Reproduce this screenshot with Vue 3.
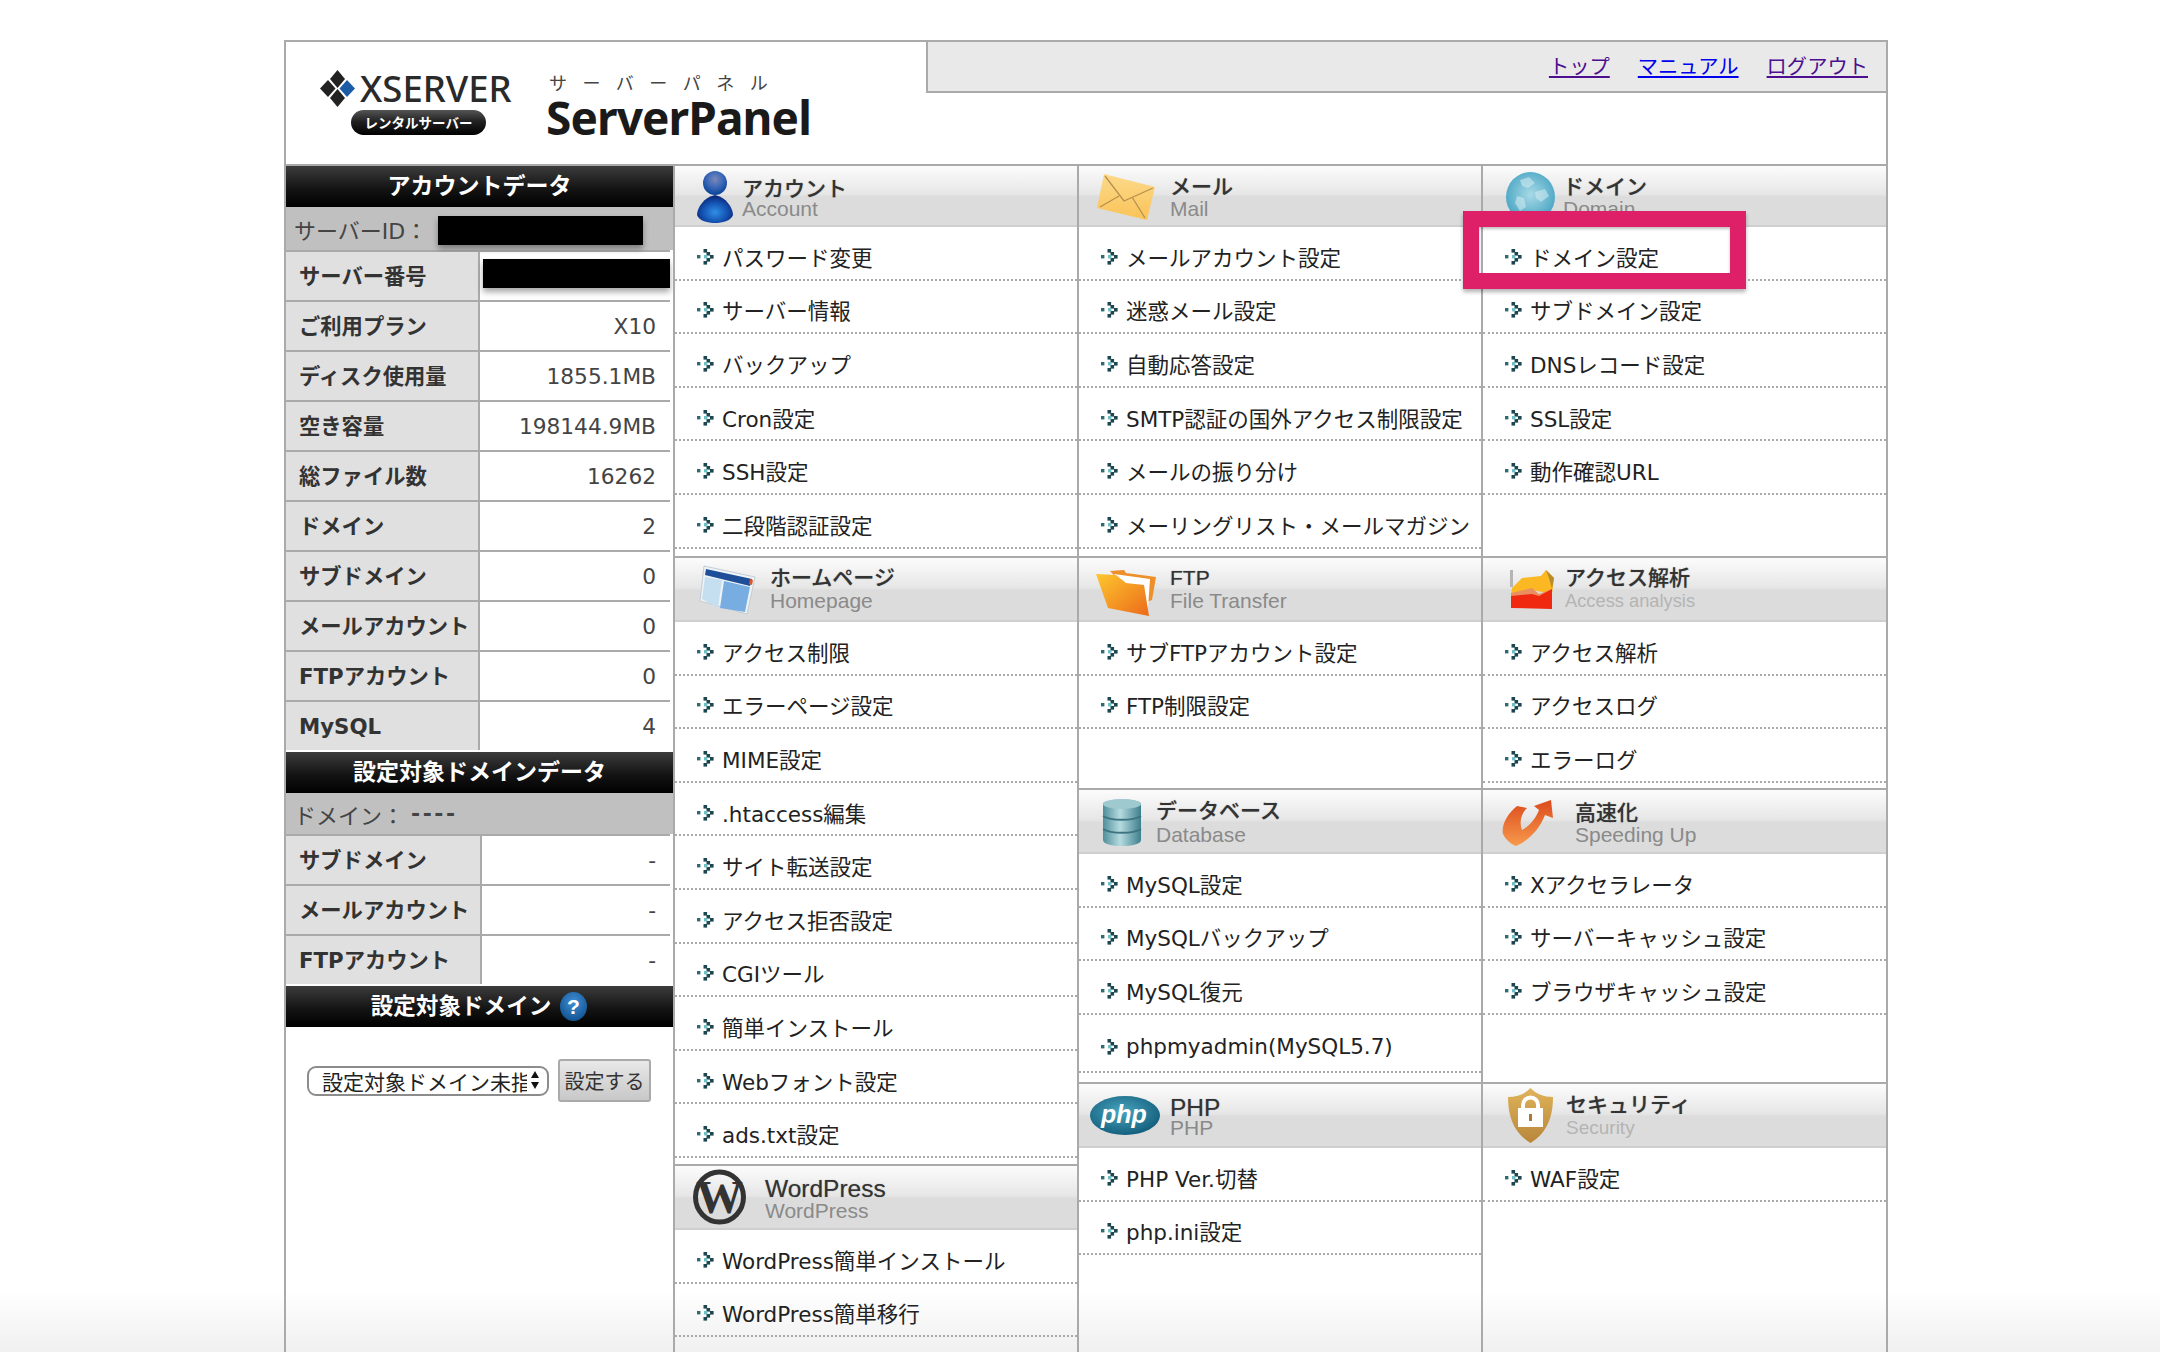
<script setup>
const statsA = [
  ['サーバー番号', null],
  ['ご利用プラン', 'X10'],
  ['ディスク使用量', '1855.1MB'],
  ['空き容量', '198144.9MB'],
  ['総ファイル数', '16262'],
  ['ドメイン', '2'],
  ['サブドメイン', '0'],
  ['メールアカウント', '0'],
  ['FTPアカウント', '0'],
  ['MySQL', '4'],
]
const statsB = [
  ['サブドメイン', '-'],
  ['メールアカウント', '-'],
  ['FTPアカウント', '-'],
]
const columns = [
  [
    { icon: 'account', title: 'アカウント', sub: 'Account', h: 390, first: true, ix: 22, iy: 5, w: 36, ih: 52, tx: 67, tc: 21, sc: 43,
      items: ['パスワード変更', 'サーバー情報', 'バックアップ', 'Cron設定', 'SSH設定', '二段階認証設定'] },
    { icon: 'home', title: 'ホームページ', sub: 'Homepage', h: 608, ix: 25, iy: 8, w: 55, ih: 48, tx: 95, tc: 18, sc: 43,
      items: ['アクセス制限', 'エラーページ設定', 'MIME設定', '.htaccess編集', 'サイト転送設定', 'アクセス拒否設定', 'CGIツール', '簡単インストール', 'Webフォント設定', 'ads.txt設定'] },
    { icon: 'wp', title: 'WordPress', sub: 'WordPress', h: 200, big: true, ix: 18, iy: 4, w: 53, ih: 54, tx: 90, tc: 21, sc: 45,
      items: ['WordPress簡単インストール', 'WordPress簡単移行'] },
  ],
  [
    { icon: 'mail', title: 'メール', sub: 'Mail', h: 390, first: true, ix: 18, iy: 8, w: 58, ih: 46, tx: 91, tc: 19, sc: 43,
      items: ['メールアカウント設定', '迷惑メール設定', '自動応答設定', 'SMTP認証の国外アクセス制限設定', 'メールの振り分け', 'メーリングリスト・メールマガジン'] },
    { icon: 'ftp', title: 'FTP', sub: 'File Transfer', h: 232, ix: 17, iy: 12, w: 60, ih: 46, tx: 91, tc: 18, sc: 43,
      items: ['サブFTPアカウント設定', 'FTP制限設定'] },
    { icon: 'db', title: 'データベース', sub: 'Database', h: 294, ix: 24, iy: 8, w: 38, ih: 48, tx: 77, tc: 19, sc: 45,
      items: ['MySQL設定', 'MySQLバックアップ', 'MySQL復元', 'phpmyadmin(MySQL5.7)'] },
    { icon: 'php', title: 'PHP', sub: 'PHP', h: 270, big: true, ix: 11, iy: 12, w: 70, ih: 39, tx: 91, tc: 22, sc: 44,
      items: ['PHP Ver.切替', 'php.ini設定'] },
  ],
  [
    { icon: 'globe', title: 'ドメイン', sub: 'Domain', h: 390, first: true, ix: 23, iy: 6, w: 49, ih: 50, tx: 80, tc: 19, sc: 43,
      items: ['ドメイン設定', 'サブドメイン設定', 'DNSレコード設定', 'SSL設定', '動作確認URL'] },
    { icon: 'access', title: 'アクセス解析', sub: 'Access analysis', h: 232, ix: 27, iy: 12, w: 48, ih: 42, tx: 82, tc: 18, sc: 43,
      items: ['アクセス解析', 'アクセスログ', 'エラーログ'] },
    { icon: 'speed', title: '高速化', sub: 'Speeding Up', h: 294, ix: 18, iy: 10, w: 53, ih: 46, tx: 92, tc: 21, sc: 45,
      items: ['Xアクセラレータ', 'サーバーキャッシュ設定', 'ブラウザキャッシュ設定'] },
    { icon: 'shield', title: 'セキュリティ', sub: 'Security', h: 270, ix: 25, iy: 4, w: 45, ih: 55, tx: 83, tc: 19, sc: 44,
      items: ['WAF設定'] },
  ],
]
</script>

<template>
  <div class="page">
    <div class="frame">
      <header class="top">
        <div class="brand">
          <svg class="mark" viewBox="0 0 35 37" width="35" height="37" aria-hidden="true">
            <polygon points="17.5,0 25,9 17.5,18 10,9" fill="#222" />
            <polygon points="8,10 15.5,18.5 8,27 0,18.5" fill="#222" />
            <polygon points="27,10 35,18.5 27,27 19.5,18.5" fill="#1c5ba6" />
            <polygon points="17.5,19 25,28 17.5,37 10,28" fill="#222" />
          </svg>
          <div class="brand-text">
            <div class="xserver">XSERVER</div>
            <div class="pill">レンタルサーバー</div>
          </div>
        </div>
        <div class="panel">
          <div class="panel-ja">サーバーパネル</div>
          <div class="panel-en">ServerPanel</div>
        </div>
        <nav class="links">
          <a class="seen">トップ</a>
          <a class="fresh">マニュアル</a>
          <a class="seen">ログアウト</a>
        </nav>
      </header>

      <div class="body">
        <aside class="side">
          <h2 class="bar">アカウントデータ</h2>
          <div class="idrow">サーバーID：<span class="mask id"></span></div>
          <div v-for="s in statsA" :key="s[0]" class="stat">
            <div class="lab">{{ s[0] }}</div>
            <div class="val"><span v-if="s[1] === null" class="mask num"></span><template v-else>{{ s[1] }}</template></div>
          </div>
          <h2 class="bar ruled">設定対象ドメインデータ</h2>
          <div class="idrow short">ドメイン： <span class="dashes">----</span></div>
          <div v-for="s in statsB" :key="s[0]" class="stat wide">
            <div class="lab">{{ s[0] }}</div>
            <div class="val">{{ s[1] }}</div>
          </div>
          <h2 class="bar ruled last">設定対象ドメイン
            <svg class="help" viewBox="0 0 29 29" width="29" height="29" aria-hidden="true">
              <defs>
                <radialGradient id="hg" cx="50%" cy="35%" r="70%"><stop offset="0" stop-color="#3f8fd6" /><stop offset="1" stop-color="#0f4f8c" /></radialGradient>
              </defs>
              <ellipse cx="14.5" cy="14.5" rx="13.5" ry="14.5" fill="url(#hg)" />
              <text x="14.5" y="22" text-anchor="middle" class="help-q">?</text>
            </svg>
          </h2>
          <form class="pick" @submit.prevent>
            <div class="sel-wrap">
              <select class="sel"><option>設定対象ドメイン未指定</option></select>
              <svg class="updown" viewBox="0 0 10 20" width="10" height="20" aria-hidden="true">
                <polygon points="5,1 9,8 1,8" fill="#111" /><polygon points="5,19 9,12 1,12" fill="#111" />
              </svg>
            </div>
            <button class="go" type="button">設定する</button>
          </form>
        </aside>

        <div v-for="(col, ci) in columns" :key="ci" class="col">
          <section v-for="s in col" :key="s.icon" class="sec" :class="[s.icon, { first: s.first }]" :style="{ height: s.h + 'px' }">
            <div class="head">
              <svg class="ico" :style="{ marginLeft: s.ix + 'px', marginTop: s.iy + 'px', width: s.w + 'px', height: s.ih + 'px' }" :viewBox="`0 0 ${s.w} ${s.ih}`" preserveAspectRatio="none" aria-hidden="true">
                <template v-if="s.icon === 'account'">
                  <defs>
                    <radialGradient id="ga" cx="50%" cy="62%" r="55%"><stop offset="0" stop-color="#2f8fe6" /><stop offset=".6" stop-color="#1555b4" /><stop offset="1" stop-color="#0b2c80" /></radialGradient>
                    <radialGradient id="gb" cx="50%" cy="35%" r="60%"><stop offset="0" stop-color="#7d88b8" /><stop offset=".55" stop-color="#3d69b8" /><stop offset="1" stop-color="#10489c" /></radialGradient>
                  </defs>
                  <ellipse cx="18" cy="12" rx="12" ry="12" fill="url(#gb)" />
                  <path d="M18 24C7 26 0 37 0 44c2 6 11 8 18 8s16-2 18-8c0-7-7-18-18-20z" fill="url(#ga)" />
                </template>
                <template v-else-if="s.icon === 'mail'">
                  <defs><linearGradient id="gm" x1="0" y1="0" x2="0" y2="1"><stop offset="0" stop-color="#fdd98a" /><stop offset="1" stop-color="#f9c358" /></linearGradient></defs>
                  <polygon points="7,0 58,13 50,46 0,34" fill="url(#gm)" />
                  <path d="M8 2L27 27 56 14M3 33L22 22M48 44L35 23" fill="none" stroke="#b5914e" stroke-width="1.3" />
                </template>
                <template v-else-if="s.icon === 'globe'">
                  <defs><radialGradient id="gg" cx="50%" cy="45%" r="55%"><stop offset="0" stop-color="#a8d9e6" /><stop offset="1" stop-color="#4aa6c4" /></radialGradient></defs>
                  <ellipse cx="24.5" cy="25" rx="24.5" ry="25" fill="url(#gg)" />
                  <path d="M14 8l9-3 6 6-7 5-6-2zM29 20l10-3 4 7-8 6-5-4zM11 24l7 2 2 9-6 4-5-8z" fill="#d6edf3" opacity=".55" />
                </template>
                <template v-else-if="s.icon === 'home'">
                  <polygon points="4,0 55,11 47,48 0,35" fill="#eef3f7" stroke="#c5ccd2" />
                  <polygon points="6,3 52,13 50,20 5,9" fill="#1d4e97" />
                  <polygon points="50,13 53,14 52,19 49,18" fill="#e0552d" />
                  <polygon points="5,11 22,14 18,42 2,33" fill="#c5def0" />
                  <polygon points="24,15 50,21 45,46 20,42" fill="#78ade2" />
                </template>
                <template v-else-if="s.icon === 'ftp'">
                  <defs><linearGradient id="gf" x1="0" y1="0" x2="1" y2="1"><stop offset="0" stop-color="#fdc72e" /><stop offset="1" stop-color="#ec6a1a" /></linearGradient></defs>
                  <polygon points="14,1 28,0 30,3 60,7 56,30 45,34" fill="#ef8f2a" />
                  <polygon points="18,4 54,9 52,38 28,16" fill="#fff" />
                  <path d="M0 4L20 5 30 13 48 15 53 46 12 38z" fill="url(#gf)" />
                </template>
                <template v-else-if="s.icon === 'access'">
                  <path d="M0 0h3v17H0z" fill="#b5b5b5" />
                  <polygon points="2,18 12,8 31,6 36,0 44,8 42,24 22,20 1,25" fill="#fbb823" />
                  <polygon points="36,0 44,8 42,19 39,8" fill="#b88a2a" />
                  <polygon points="1,23 22,18 29,24 42,19 42,26 1,29" fill="#ea9060" />
                  <polygon points="1,26 22,24 29,26 42,19 42,39 1,38" fill="#f0280f" />
                </template>
                <template v-else-if="s.icon === 'db'">
                  <defs><linearGradient id="gd" x1="0" y1="0" x2="1" y2="0"><stop offset="0" stop-color="#4f8f9a" /><stop offset=".45" stop-color="#b6dbe0" /><stop offset="1" stop-color="#3d7f8c" /></linearGradient></defs>
                  <path d="M0 6C0 0 38 0 38 6V42C38 50 0 50 0 42z" fill="url(#gd)" />
                  <path d="M0 18c8 5 30 5 38 0M0 31c8 5 30 5 38 0" fill="none" stroke="#3d7480" stroke-width="2" />
                  <ellipse cx="19" cy="6" rx="19" ry="5" fill="#9ec9cf" />
                </template>
                <template v-else-if="s.icon === 'speed'">
                  <defs><linearGradient id="gs" x1="0" y1="0" x2="0" y2="1"><stop offset="0" stop-color="#dc4a1c" /><stop offset="1" stop-color="#f79a4c" /></linearGradient></defs>
                  <path d="M16 6C6 14 0 26 2 34 5 40 10 44 15 46 28 40 38 30 44 15L52 18 50 0 33 6 38 10C34 20 28 26 21 30 18 22 20 14 26 8z" fill="url(#gs)" />
                </template>
                <template v-else-if="s.icon === 'php'">
                  <defs><radialGradient id="gp" cx="45%" cy="40%" r="65%"><stop offset="0" stop-color="#4aa6bf" /><stop offset="1" stop-color="#0f5a78" /></radialGradient></defs>
                  <ellipse cx="35" cy="19.5" rx="35" ry="19.5" fill="url(#gp)" />
                  <text x="34" y="27" text-anchor="middle" class="php-t">php</text>
                </template>
                <template v-else-if="s.icon === 'shield'">
                  <defs><linearGradient id="gh" x1="0" y1="0" x2="0" y2="1"><stop offset="0" stop-color="#dfb35a" /><stop offset="1" stop-color="#b8863a" /></linearGradient></defs>
                  <path d="M22.5 0C17 6 9 9 0 9c0 20 6 36 22.5 46C39 45 45 29 45 9c-9 0-17-3-22.5-9z" fill="url(#gh)" />
                  <path d="M13 20v-3a9.5 9.5 0 0 1 19 0v3h-4v-3a5.5 5.5 0 0 0-11 0v3z" fill="#fff" />
                  <rect x="10" y="20" width="25" height="19" fill="#fff" />
                  <rect x="21" y="26" width="3" height="7" fill="#a87c30" />
                </template>
                <template v-else>
                  <ellipse cx="26.5" cy="27" rx="24" ry="25" fill="none" stroke="#333" stroke-width="5" />
                  <text x="26.5" y="43" text-anchor="middle" class="wp-t">W</text>
                </template>
              </svg>
              <div :style="{ marginLeft: s.tx - s.ix - s.w + 'px', paddingTop: s.tc - 10 + 'px' }">
                <div class="ttl" :class="{ big: s.big }">{{ s.title }}</div>
                <div class="sub" :style="{ marginTop: s.sc - s.tc - 25 + 'px' }">{{ s.sub }}</div>
              </div>
            </div>
            <a v-for="it in s.items" :key="it" class="item" :class="{ tall: it.startsWith('phpmyadmin') }">
              <svg class="arr" viewBox="0 0 17 17" width="17" height="17" aria-hidden="true">
                <rect x="0" y="7" width="3.4" height="3.4" fill="#2d6a74" />
                <rect x="6.5" y="1" width="3.6" height="3.6" fill="#1c4650" />
                <rect x="9.5" y="4" width="3.6" height="3.6" fill="#1c4650" />
                <rect x="13" y="7" width="3.6" height="3.6" fill="#1c4650" />
                <rect x="9.5" y="10" width="3.6" height="3.6" fill="#1c4650" />
                <rect x="6.5" y="13" width="3.6" height="3.6" fill="#1c4650" />
                <rect x="7" y="7" width="3.4" height="3.4" fill="#6fc0c4" />
              </svg>
              <span>{{ it }}</span>
            </a>
          </section>
        </div>
      </div>

      <div class="callout"></div>
    </div>
  </div>
</template>

<style scoped>
.page {
  height: 1352px;
  overflow: hidden;
  background: linear-gradient(to bottom, #fff 0, #fff 1290px, #f0f0f0 1352px);
  font-family: "DejaVu Sans", "Noto Sans CJK JP", sans-serif;
  color: #222;
}
.frame {
  position: relative;
  width: 1600px;
  margin: 40px 0 0 284px;
  border: 2px solid #aaa;
  border-bottom: 0;
  height: 1400px;
}
.top {
  height: 122px;
  border-bottom: 2px solid #aaa;
  display: flex;
  align-items: flex-start;
}
.brand {
  display: flex;
  align-items: flex-start;
  margin: 28px 0 0 34px;
  width: 226px;
  flex: none;
}
.mark { flex: none; }
.brand-text { margin-left: 5px; width: 155px; }
.xserver {
  font: 500 36.5px/36px "Noto Sans", sans-serif;
  color: #2a2a2a;
  height: 38px;
  white-space: nowrap;
}
.pill {
  margin: 2px 0 0 -9px;
  width: 135px;
  height: 25px;
  border-radius: 13px;
  background: linear-gradient(to bottom, #555 0, #222 45%, #000 100%);
  color: #fff;
  font: 700 13.5px/25px "Noto Sans CJK JP", sans-serif;
  text-align: center;
  white-space: nowrap;
}
.panel { margin: 28px 0 0 0; width: 300px; flex: none; }
.panel-ja {
  font: 400 18px/24px "Noto Sans CJK JP", sans-serif;
  letter-spacing: 15.5px;
  color: #444;
  white-space: nowrap;
  padding-left: 3px;
  height: 24px;
}
.panel-en {
  font: 700 46px/46px "Noto Sans", sans-serif;
  color: #1a1a1a;
  letter-spacing: -.9px;
  height: 46px;
}
.links {
  margin-left: auto;
  box-sizing: border-box;
  width: 960px;
  height: 51px;
  background: #e9e9e9;
  border-left: 2px solid #aaa;
  border-bottom: 2px solid #aaa;
  display: flex;
  justify-content: flex-end;
  align-items: center;
  gap: 28px;
  padding: 0 18px 3px 0;
  font: 400 20.3px/28px "Noto Sans CJK JP", sans-serif;
}
.links a { text-decoration: underline; cursor: pointer; }
.seen { color: #4b0f8f; }
.fresh { color: #0000ee; }

.body { display: grid; grid-template-columns: 387px 404px 404px 405px; }
.side { font-size: 21.3px; }
.bar {
  margin: 0;
  height: 41px;
  display: flex;
  align-items: center;
  justify-content: center;
  gap: 8px;
  background: linear-gradient(to bottom, #3c3c3c 0, #141414 55%, #000 100%);
  color: #fff;
  font-size: 23px;
  font-weight: 700;
  line-height: 41px;
}
.bar.ruled { margin-top: 2px; }
.bar.last { font-size: 22.6px; }
.help { flex: none; }
.help-q { font: 700 21px "Liberation Sans", sans-serif; fill: #fff; }
.idrow {
  height: 43px;
  box-sizing: border-box;
  padding-left: 8px;
  display: flex;
  align-items: center;
  background: #c0c0c0;
  color: #444;
  font-size: 22px;
  white-space: pre;
}
.idrow.short { height: 41px; }
.dashes { letter-spacing: 2.5px; font-weight: 700; }
.mask { display: block; background: #000; box-shadow: 0 4px 6px rgba(0, 0, 0, .35); }
.mask.id { width: 205px; height: 29px; margin: 3px 0 0 11px; }
.mask.num { width: 187px; height: 29px; margin: 7px 0 0 3px; }
.stat {
  height: 50px;
  box-sizing: border-box;
  border-top: 2px solid #aaa;
  display: flex;
  margin-right: 3px;
}
.lab {
  width: 194px;
  flex: none;
  box-sizing: border-box;
  padding-left: 13px;
  background: #e0e0e0;
  border-right: 2px solid #aaa;
  font-weight: 700;
  color: #333;
  line-height: 50px;
  white-space: nowrap;
}
.wide .lab { width: 196px; }
.val {
  flex: 1;
  min-width: 0;
  text-align: right;
  padding-right: 14px;
  line-height: 50px;
  font-size: 21.7px;
  color: #444;
}
.val:has(.mask) { padding-right: 0; }
.pick {
  display: flex;
  align-items: center;
  gap: 9px;
  padding: 32px 0 0 21px;
}
.sel-wrap { position: relative; height: 30px; }
.sel {
  appearance: none;
  width: 242px;
  height: 30px;
  box-sizing: border-box;
  border: 2px solid #8c8c8c;
  border-radius: 9px;
  background: #fff;
  padding: 0 20px 0 13px;
  font: 400 21px/26px "Noto Sans CJK JP", sans-serif;
  color: #222;
}
.updown { position: absolute; right: 9px; top: 4px; }
.go {
  width: 93px;
  height: 43px;
  box-sizing: border-box;
  border: 2px solid #aaa;
  border-radius: 3px;
  background: linear-gradient(to bottom, #e8e8e8, #c8c8c8);
  font: 400 20px/26px "Noto Sans CJK JP", sans-serif;
  color: #333;
  padding: 0;
}

.col { border-left: 2px solid #aaa; min-width: 0; }
.sec { border-top: 2px solid #aaa; box-sizing: border-box; }
.sec.first { border-top: 0; }
.head {
  height: 64px;
  box-sizing: border-box;
  display: flex;
  align-items: flex-start;
  border-bottom: 2px solid #cfcfcf;
  background: linear-gradient(to bottom, #fcfcfc 0, #e6e6e6 48%, #dcdcdc 52%, #dcdcdc 100%);
}
.first .head { height: 61px; }
.ico { flex: none; display: block; overflow: visible; }
.ttl {
  font: 500 21px/24px "Liberation Sans", "Noto Sans CJK JP", sans-serif;
  color: #333;
  height: 24px;
  white-space: nowrap;
  text-shadow: 0 0 1px rgba(50, 50, 50, .5);
}
.ttl.big { font-size: 24.5px; }
.sub {
  font: 400 21px/22px "Liberation Sans", sans-serif;
  color: #8a8a8a;
  white-space: nowrap;
}
.access .sub { font-size: 18.3px; color: #b4b4b4; }
.shield .sub { font-size: 19px; color: #b4b4b4; }
.php-t { font: italic 700 25px "Liberation Sans", sans-serif; fill: #fff; }
.wp-t { font: 700 47px "Liberation Serif", serif; fill: #333; }
.item {
  height: 53.6px;
  box-sizing: border-box;
  border-bottom: 2px dotted #aaa;
  display: flex;
  align-items: center;
  padding: 7px 0 0 22px;
  font-size: 21.5px;
  color: #222;
  white-space: nowrap;
  cursor: pointer;
}
.item.tall { height: 58px; }
.arr { flex: none; margin-right: 8px; }
.callout {
  position: absolute;
  left: 1177px;
  top: 169px;
  width: 283px;
  height: 78px;
  box-sizing: border-box;
  border: 16px solid #de2069;
  box-shadow: 0 3px 4px rgba(0, 0, 0, .3), inset 0 2px 3px rgba(0, 0, 0, .25);
  pointer-events: none;
}
</style>

<style>
html, body { margin: 0; background: #fff; }
</style>
